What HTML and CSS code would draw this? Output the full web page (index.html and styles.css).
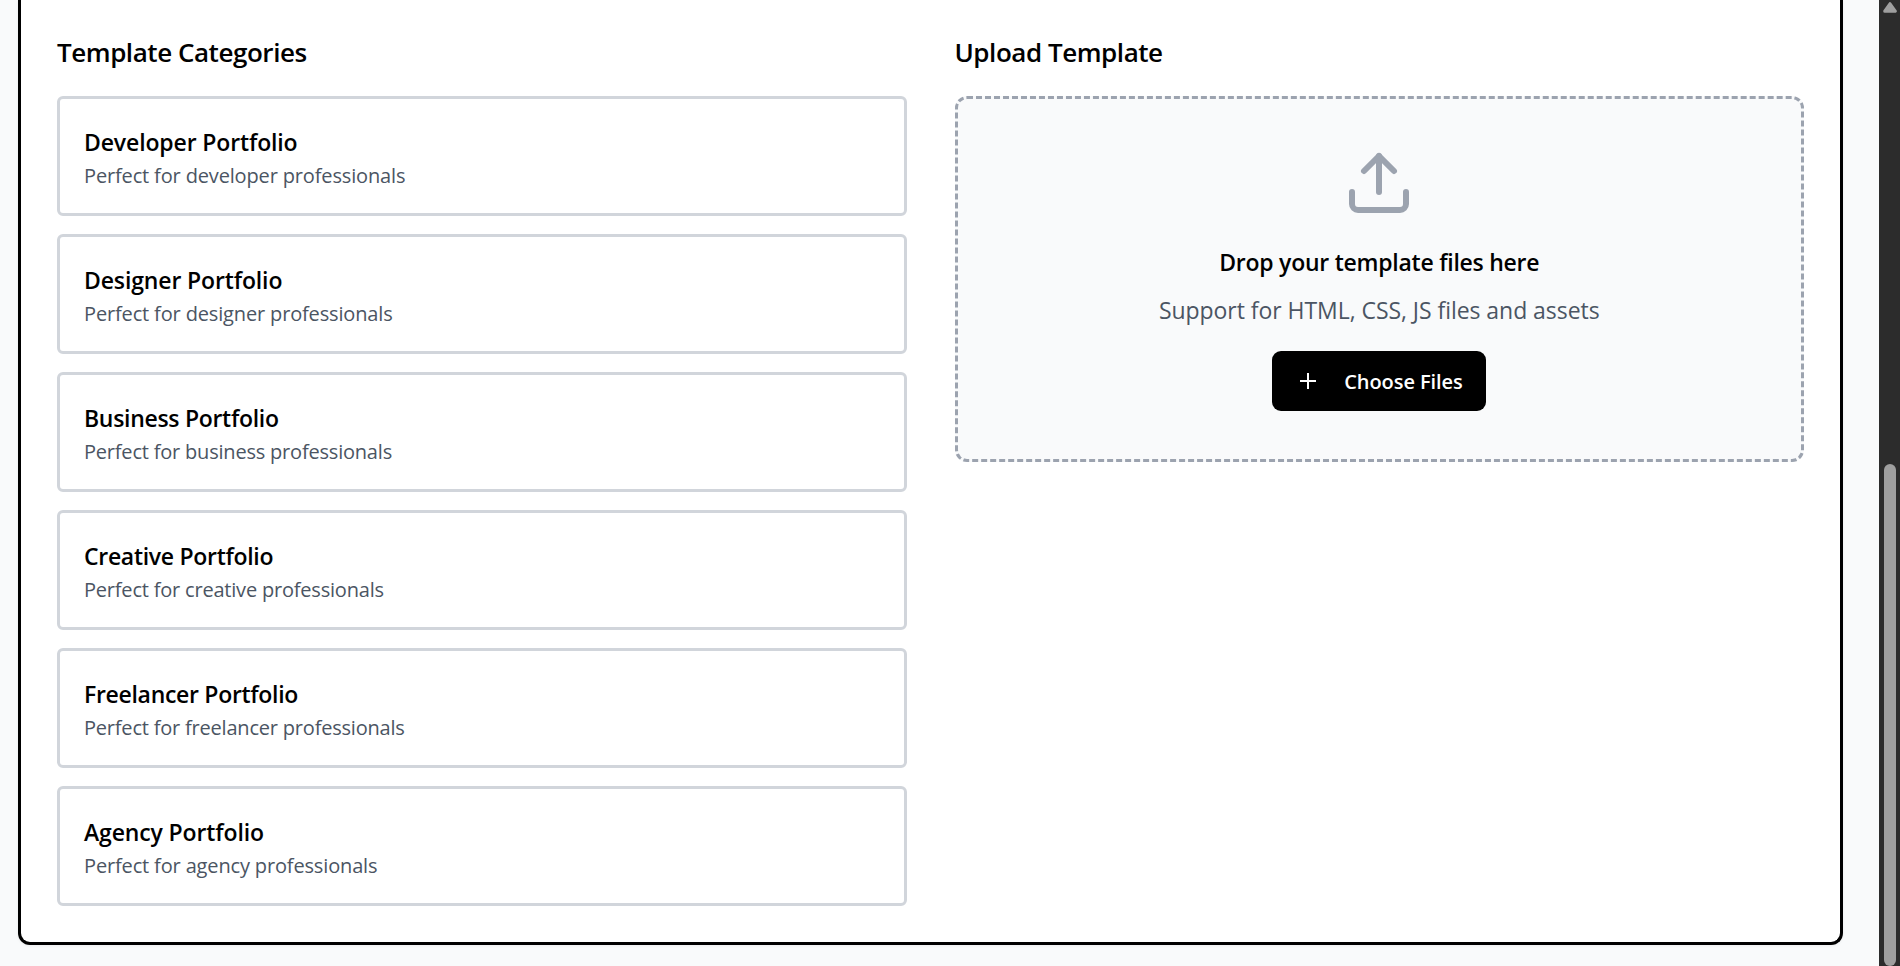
FILE: index.html
```html
<!DOCTYPE html>
<html lang="en">
<head>
<meta charset="utf-8">
<title>Template Categories</title>
<link rel="stylesheet" href="styles.css">
</head>
<body>
<div class="viewport">
  <main class="page">
    <section class="panel">
      <div class="column">
        <h3 class="heading">Template Categories</h3>
        <div class="cards">
          <article class="card card-wide"><h4 class="card-title">Developer Portfolio</h4><p class="card-text">Perfect for developer professionals</p></article>
          <article class="card card-wide"><h4 class="card-title">Designer Portfolio</h4><p class="card-text">Perfect for designer professionals</p></article>
          <article class="card"><h4 class="card-title">Business Portfolio</h4><p class="card-text">Perfect for business professionals</p></article>
          <article class="card"><h4 class="card-title">Creative Portfolio</h4><p class="card-text">Perfect for creative professionals</p></article>
          <article class="card"><h4 class="card-title">Freelancer Portfolio</h4><p class="card-text">Perfect for freelancer professionals</p></article>
          <article class="card card-wide"><h4 class="card-title">Agency Portfolio</h4><p class="card-text">Perfect for agency professionals</p></article>
        </div>
      </div>
      <div class="column">
        <h3 class="heading">Upload Template</h3>
        <div class="dropzone">
          <svg class="upload-icon" viewBox="0 0 24 24" fill="none" stroke="currentColor" stroke-width="2" stroke-linecap="round" stroke-linejoin="round"><path d="M21 15v4a2 2 0 0 1-2 2H5a2 2 0 0 1-2-2v-4"/><path d="M17 8l-5-5-5 5"/><path d="M12 3v12"/></svg>
          <h4 class="drop-title">Drop your template files here</h4>
          <p class="drop-text">Support for HTML, CSS, JS files and assets</p>
          <button class="choose" type="button">
            <svg class="plus-icon" viewBox="0 0 24 24" fill="none" stroke="currentColor" stroke-width="2"><path d="M4 12h16M12 4v16"/></svg>
            <span class="choose-label">Choose Files</span>
          </button>
        </div>
      </div>
    </section>
  </main>
  <div class="scrollbar">
    <svg class="scroll-arrow" viewBox="0 0 14 11"><path d="M7 1.8L12.2 9.2H1.8Z" fill="#9f9f9f" stroke="#9f9f9f" stroke-width="3.2" stroke-linejoin="round"/></svg>
    <div class="thumb"></div>
  </div>
</div>
</body>
</html>
```
FILE: styles.css
```css
* { box-sizing: border-box; margin: 0; padding: 0; }
body { font-family: "Open Sans", "Noto Sans", sans-serif; color: #000; background: #f9fafb; }
.viewport { display: flex; height: 966px; overflow: hidden; }
.page { flex: 1; padding: 0 36px 21px 18px; background: #f9fafb; }
.panel {
  display: grid;
  grid-template-columns: 1fr 1fr;
  gap: 48px;
  height: 945px;
  padding: 36px 36px 0;
  background: #fff;
  border: 3px solid #000;
  border-top: 0;
  border-radius: 0 0 12px 12px;
  box-shadow: 0 1px 3px rgba(0, 0, 0, 0.06);
}
.heading { height: 36px; margin-bottom: 24px; font-size: 26px; line-height: 32px; font-weight: 600; letter-spacing: -0.45px; white-space: nowrap; }
.cards { display: flex; flex-direction: column; gap: 18px; }
.card { height: 120px; padding: 25px 24px 20px; border: 3px solid #d1d5db; border-radius: 6px; background: #fff; }
.card-title { font-size: 23px; line-height: 36px; font-weight: 600; letter-spacing: -0.3px; }
.card-wide .card-title { letter-spacing: -0.13px; }
.card-text { font-size: 20px; line-height: 32px; color: #4b5563; letter-spacing: -0.2px; }
.card-wide .card-text { letter-spacing: -0.15px; }
.dropzone {
  display: flex;
  flex-direction: column;
  align-items: center;
  height: 366px;
  padding: 45px 48px;
  padding-top: 48px;
  background: #f9fafb;
  border: 3px dashed #9ca3af;
  border-radius: 12px;
}
.upload-icon { width: 72px; height: 72px; margin-bottom: 25px; color: #9ca3af; }
.drop-title { margin-bottom: 12px; font-size: 23px; line-height: 36px; font-weight: 600; letter-spacing: -0.25px; white-space: nowrap; }
.drop-text { margin-bottom: 23px; font-size: 23px; line-height: 36px; color: #4b5563; letter-spacing: -0.05px; white-space: nowrap; }
.choose {
  display: flex;
  align-items: center;
  gap: 24px;
  width: 214px;
  height: 60px;
  padding: 0 24px;
  background: #000;
  color: #fff;
  border: 0;
  border-radius: 9px;
  font: 600 20px/30px "Open Sans", "Noto Sans", sans-serif;
  letter-spacing: -0.08px;
  white-space: nowrap;
}
.plus-icon { flex: none; width: 24px; height: 24px; }
.choose-label { padding-top: 2px; }
.scrollbar { display: flex; flex-direction: column; align-items: center; width: 21px; background: #2c2c2c; }
.scroll-arrow { width: 14px; height: 11px; margin: 2px 0 451px; }
.thumb { width: 12px; height: 502px; background: #9f9f9f; border-radius: 6px; }
```
